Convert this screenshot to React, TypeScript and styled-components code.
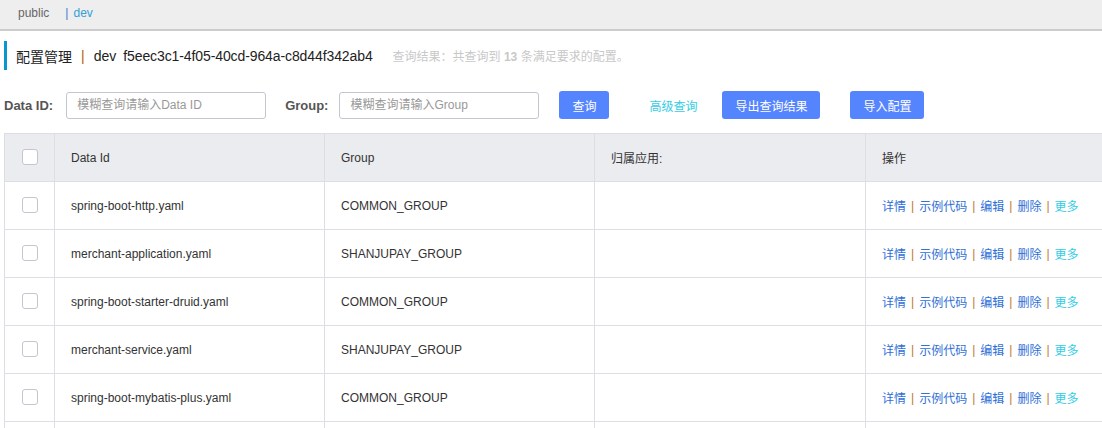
import React from "react";
import styled, { createGlobalStyle } from "styled-components";

const Global = createGlobalStyle`
  html, body { margin: 0; padding: 0; background: #fff; overflow: hidden; }
  body { font-family: "Liberation Sans", "Noto Sans CJK SC", sans-serif; color: #333; }
  * { box-sizing: border-box; }
`;

const Page = styled.div`
  width: 1102px;
  height: 428px;
  overflow: hidden;
`;

const NsBar = styled.div`
  height: 31px;
  background: #eeeeee;
  border-bottom: 2px solid #cccccc;
  display: flex;
  align-items: center;
  padding: 0 0 4px 18px;
  font-size: 12px;
  color: #666;
`;

const NsItem = styled.span<{ $active?: boolean }>`
  color: ${(p) => (p.$active ? "#33a0d6" : "#666")};
  margin-right: ${(p) => (p.$active ? "0" : "16px")};
`;

const NsSep = styled.span`
  color: #3a7fd0;
  margin-right: 5px;
`;

const TitleRow = styled.div`
  margin: 10px 0 0 4px;
  height: 29px;
  border-left: 3px solid #0a96cf;
  display: flex;
  align-items: center;
  padding-left: 9px;
  font-size: 14px;
  color: #222;
`;

const TitleSep = styled.span`
  color: #b35d00;
  margin: 0 9px;
`;

const Uuid = styled.span`
  margin-left: 7px;
  letter-spacing: -0.1px;
`;

const Summary = styled.span`
  margin-left: 20px;
  font-size: 12px;
  color: #c8c8c8;
  b { font-weight: bold; }
`;

const FormRow = styled.div`
  display: flex;
  align-items: center;
  margin-top: 21px;
  padding-left: 4px;
  height: 28px;
`;

const Label = styled.label<{ $gap: number }>`
  font-size: 13px;
  font-weight: bold;
  color: #555;
  margin-right: ${(p) => p.$gap}px;
`;

const Input = styled.input<{ $gap: number }>`
  width: 200px;
  height: 27px;
  border: 1px solid #c4c6cf;
  border-radius: 3px;
  padding: 0 10px;
  font-size: 12px;
  font-family: inherit;
  margin-right: ${(p) => p.$gap}px;
  &::placeholder { color: #999; }
`;

const Button = styled.button<{ $w: number; $gap: number }>`
  width: ${(p) => p.$w}px;
  height: 28px;
  border: none;
  border-radius: 3px;
  background: #5584ff;
  color: #fff;
  font-size: 12px;
  font-family: inherit;
  margin-right: ${(p) => p.$gap}px;
  padding: 0;
`;

const LinkText = styled.span`
  font-size: 12px;
  color: #33cde5;
  margin-right: 25px;
`;

const Table = styled.div`
  margin: 14px 0 0 4px;
  width: 1130px;
  border-top: 1px solid #dcdee3;
  border-left: 1px solid #dcdee3;
`;

const Row = styled.div<{ $head?: boolean }>`
  display: grid;
  grid-template-columns: 50px 270px 270px 271px 1fr;
  height: 48px;
  background: ${(p) => (p.$head ? "#ebecf0" : "#fff")};
`;

const Cell = styled.div<{ $center?: boolean }>`
  border-right: 1px solid #dcdee3;
  border-bottom: 1px solid #dcdee3;
  display: flex;
  align-items: center;
  justify-content: ${(p) => (p.$center ? "center" : "flex-start")};
  padding-left: ${(p) => (p.$center ? "0" : "16px")};
  font-size: 12px;
  color: #333;
`;

const Check = styled.span`
  width: 16px;
  height: 16px;
  border: 1px solid #c4c6cf;
  border-radius: 3px;
  background: #fff;
  margin-top: -2px;
`;

const Op = styled.span<{ $more?: boolean }>`
  color: ${(p) => (p.$more ? "#33cde5" : "#2f6fd8")};
`;

const OpSep = styled.span`
  color: #c2772a;
  margin: 0 5px;
`;

const rows = [
  ["spring-boot-http.yaml", "COMMON_GROUP"],
  ["merchant-application.yaml", "SHANJUPAY_GROUP"],
  ["spring-boot-starter-druid.yaml", "COMMON_GROUP"],
  ["merchant-service.yaml", "SHANJUPAY_GROUP"],
  ["spring-boot-mybatis-plus.yaml", "COMMON_GROUP"],
];

const Ops = () => (
  <>
    <Op>详情</Op>
    <OpSep>|</OpSep>
    <Op>示例代码</Op>
    <OpSep>|</OpSep>
    <Op>编辑</Op>
    <OpSep>|</OpSep>
    <Op>删除</Op>
    <OpSep>|</OpSep>
    <Op $more>更多</Op>
  </>
);

export default function App() {
  return (
    <Page>
      <Global />
      <NsBar>
        <NsItem>public</NsItem>
        <NsSep>|</NsSep>
        <NsItem $active>dev</NsItem>
      </NsBar>
      <TitleRow>
        配置管理
        <TitleSep>|</TitleSep>
        dev
        <Uuid>f5eec3c1-4f05-40cd-964a-c8d44f342ab4</Uuid>
        <Summary>
          查询结果：共查询到 <b>13</b> 条满足要求的配置。
        </Summary>
      </TitleRow>
      <FormRow>
        <Label $gap={13}>Data ID:</Label>
        <Input $gap={19} placeholder="模糊查询请输入Data ID" />
        <Label $gap={11}>Group:</Label>
        <Input $gap={20} placeholder="模糊查询请输入Group" />
        <Button $w={50} $gap={40}>查询</Button>
        <LinkText>高级查询</LinkText>
        <Button $w={98} $gap={30}>导出查询结果</Button>
        <Button $w={74} $gap={0}>导入配置</Button>
      </FormRow>
      <Table>
        <Row $head>
          <Cell $center><Check /></Cell>
          <Cell>Data Id</Cell>
          <Cell>Group</Cell>
          <Cell>归属应用:</Cell>
          <Cell>操作</Cell>
        </Row>
        {rows.map(([id, group]) => (
          <Row key={id}>
            <Cell $center><Check /></Cell>
            <Cell>{id}</Cell>
            <Cell>{group}</Cell>
            <Cell />
            <Cell><Ops /></Cell>
          </Row>
        ))}
        <Row>
          <Cell />
          <Cell />
          <Cell />
          <Cell />
          <Cell />
        </Row>
      </Table>
    </Page>
  );
}
